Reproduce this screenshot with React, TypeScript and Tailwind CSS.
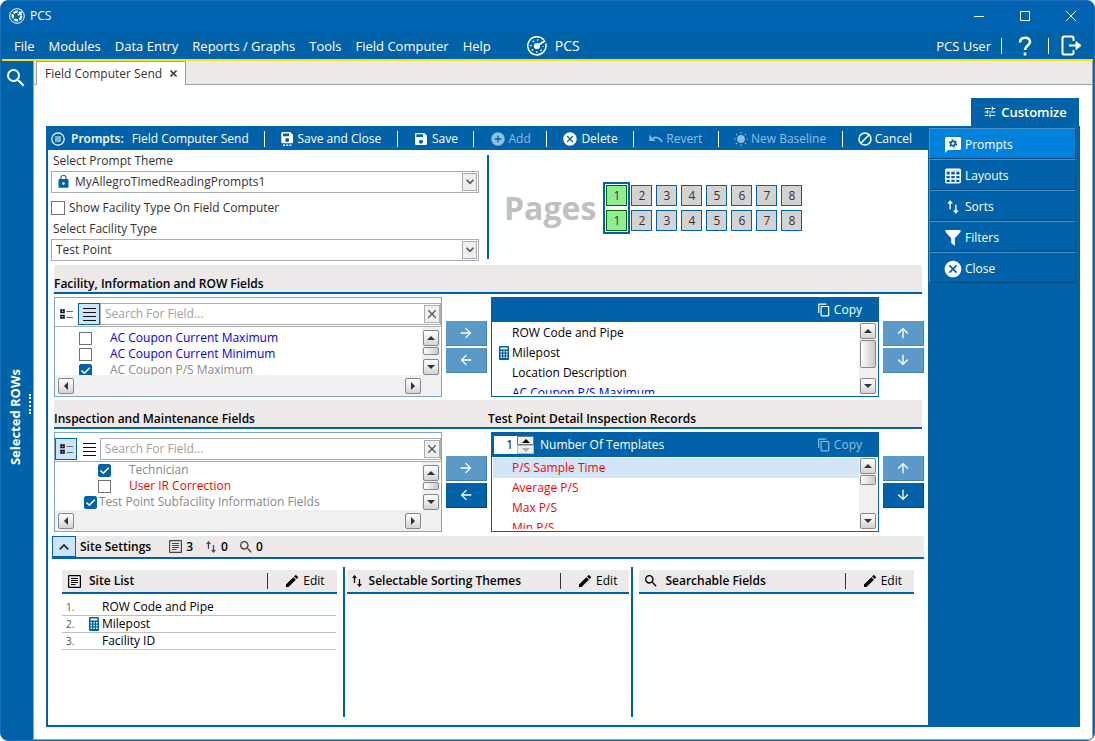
import React from "react";
import clsx from "clsx";
import {
  MdAddCircle, MdArrowBack, MdArrowDownward, MdArrowForward, MdArrowUpward, MdCancel, MdContentCopy,
  MdEdit, MdLock, MdSave, MdSearch, MdTune,
} from "react-icons/md";

type IconProps = { className?: string };

function WheelIcon({ className }: IconProps) {
  return (
    <svg viewBox="0 0 16 16" className={className} fill="none" stroke="currentColor">
      <circle cx="8" cy="8" r="7.3" strokeWidth="1" />
      <circle cx="8" cy="8" r="4.3" strokeWidth="2.2" strokeDasharray="4.2 1.2" />
      <path d="M9 7.2 13.4 3.4" strokeWidth="1.3" />
    </svg>
  )
}

function GaugeIcon({ className }: IconProps) {
  return (
    <svg viewBox="0 0 20 20" className={className} fill="none" stroke="currentColor">
      <path d="M17 4.1A9.100 9.100 0 1 0 18.700 7.500" strokeWidth="1.500" />
      <circle cx="10" cy="10" r="3.100" fill="currentColor" stroke="none" />
      <path d="M11 9.300 18.200 4.800" strokeWidth="1.700" />
      <circle cx="10" cy="10" r="6" strokeWidth="1.400" strokeDasharray="1.400 3.312" strokeDashoffset=".7" />
    </svg>
  )
}

function PromptsIcon({ className }: IconProps) {
  return (
    <svg viewBox="0 0 14 14" className={className} fill="none" stroke="currentColor" strokeWidth="1.200">
      <circle cx="7" cy="7" r="6.200" />
      <path d="M4 5h6M4 7h6M4 9h6" strokeWidth="1" />
    </svg>
  )
}

function SaveCloseIcon({ className }: IconProps) {
  return (
    <svg viewBox="0 0 14 16" className={className} fill="currentColor">
      <path fillRule="evenodd" d="M2.500 1h7.800L13 3.700V11a1.200 1.200 0 0 1-1.200 1.200H2.500A1.200 1.200 0 0 1 1.300 11V2.200A1.200 1.200 0 0 1 2.500 1ZM3 2.500v2.800h6V2.500ZM7.200 7a2 2 0 1 0 0 4 2 2 0 0 0 0-4Z" />
      <path d="M3 13.600h2V15H3zM6.200 13.600h2V15h-2zM9.400 13.600h2V15h-2z" />
    </svg>
  )
}

function RevertIcon({ className }: IconProps) {
  return (
    <svg viewBox="0 0 14 14" className={className} fill="none" stroke="currentColor" strokeWidth="1.600">
      <path d="M1.200 3.500v4.700h4.700" />
      <path d="M1.500 8C4.500 4.500 10.500 4 13 10" />
    </svg>
  )
}

function SunIcon({ className }: IconProps) {
  return (
    <svg viewBox="0 0 14 14" className={className} fill="currentColor">
      <circle cx="7" cy="7" r="3.900" />
      <path d="M6.400 0h1.200v1.600H6.400zM6.400 12.400h1.200V14H6.400zM0 6.400h1.600v1.200H0zM12.400 6.400H14v1.200h-1.600zM1.500 2.300l.8-.8 1.100 1.100-.8.8zM10.600 11.400l.8-.8 1.100 1.100-.8.8zM11.700 1.500l.8.800-1.100 1.100-.8-.8zM2.600 10.600l.8.800-1.100 1.100-.8-.8z" />
    </svg>
  )
}

function ForbidIcon({ className }: IconProps) {
  return (
    <svg viewBox="0 0 14 14" className={className} fill="none" stroke="currentColor" strokeWidth="1.500">
      <circle cx="7" cy="7" r="6" />
      <path d="M2.800 11.200 11.200 2.800" />
    </svg>
  )
}

function ChatGearIcon({ className }: IconProps) {
  return (
    <svg viewBox="0 0 16 16" className={className}>
      <path d="M1.500 0h13A1.500 1.500 0 0 1 16 1.500v10a1.500 1.500 0 0 1-1.500 1.500H3L0 16V1.500A1.500 1.500 0 0 1 1.500 0Z" fill="currentColor" />
      <circle cx="8" cy="6.500" r="2.200" fill="none" stroke="#0063a9" strokeWidth="1.700" />
      <circle cx="8" cy="6.500" r="3.500" fill="none" stroke="#0063a9" strokeWidth="1.500" strokeDasharray="1.830 1.835" />
    </svg>
  )
}

function GridIcon({ className }: IconProps) {
  return (
    <svg viewBox="0 0 16 16" className={className} fill="none" stroke="currentColor">
      <rect x=".75" y="1.250" width="14.500" height="13.500" rx="1" strokeWidth="1.500" />
      <path d="M1 3h14M1 7.200h14M1 11h14M5.500 2v12.500M10.500 2v12.500" strokeWidth="1.500" />
    </svg>
  )
}

function SortIcon({ className }: IconProps) {
  return (
    <svg viewBox="0 0 12 14" className={className} fill="none" stroke="currentColor" strokeWidth="1.200">
      <path d="M3.500 9V2M8.500 5v7" />
      <path d="M1.500 3.800h4L3.500 1.300ZM6.500 10.200h4l-2 2.500Z" fill="currentColor" strokeWidth=".5" />
    </svg>
  )
}

function FunnelIcon({ className }: IconProps) {
  return (
    <svg viewBox="0 0 16 16" className={className} fill="currentColor">
      <path d="M.5 0h15v2L9.800 8.200V16L6.200 13V8.200L.5 2Z" />
    </svg>
  )
}

function CalculatorIcon({ className }: IconProps) {
  return (
    <svg viewBox="0 0 10 14" className={className}>
      <rect width="10" height="14" rx="1" fill="#0063a9" />
      <path d="M1.500 1.500h7v2h-7zM1.500 5h1.500v1.500H1.500zM4.250 5h1.500v1.500h-1.500zM7 5h1.500v1.500H7zM1.500 7.700h1.500v1.500H1.500zM4.250 7.700h1.500v1.500h-1.500zM7 7.700h1.500v1.500H7zM1.500 10.500h1.500V12H1.500zM4.250 10.500h1.500V12h-1.500zM7 10.500h1.500V12H7z" fill="#fff" />
    </svg>
  )
}

function DocIcon({ className }: IconProps) {
  return (
    <svg viewBox="0 0 13 13" className={className} fill="none" stroke="currentColor">
      <rect x=".6" y=".6" width="11.800" height="11.800" rx=".5" strokeWidth="1.200" />
      <path d="M3 3.500h7M3 5.500h7M3 7.500h7M3 9.500h4.500" strokeWidth="1" />
    </svg>
  )
}

function LogoutIcon({ className }: IconProps) {
  return (
    <svg viewBox="0 0 21 21" className={className} fill="none" stroke="currentColor" strokeWidth="2">
      <path d="M12.500 6V3A1.500 1.500 0 0 0 11 1.500H3A1.500 1.500 0 0 0 1.500 3v15A1.500 1.500 0 0 0 3 19.500h8a1.500 1.500 0 0 0 1.500-1.500v-3" />
      <path d="M8 10.500h9" />
      <path d="M15 6.500 20 10.500 15 14.500Z" fill="currentColor" strokeWidth="1" />
    </svg>
  )
}

function TreeIcon({ className }: IconProps) {
  return (
    <svg viewBox="0 0 13 10" className={className} fill="none" stroke="#111">
      <path d="M1 1h3v2.500H1zM1 6.500h3V9H1z" strokeWidth="1.600" />
      <path d="M6.500 2.500H13M6.500 8.500H13" stroke="#666" />
    </svg>
  )
}

function LinesIcon({ className }: IconProps) {
  return (
    <svg viewBox="0 0 13 13" className={className} stroke="#111" shapeRendering="crispEdges">
      <path d="M0 .5h13M0 4.500h13M0 8.500h13M0 12.500h13" />
    </svg>
  )
}

function ArrowGlyph({ dir }: { dir: "up" | "down" | "left" | "right" }) {
  const points = { up: "4,2 8,6 0,6", down: "0,2 8,2 4,6", left: "2,4 6,0 6,8", right: "6,4 2,0 2,8" }
  return (
    <svg viewBox="0 0 8 8" className="size-2" fill="#333">
      <polygon points={points[dir]} />
    </svg>
  )
}

function ScrollButton({ dir }: { dir: "up" | "down" | "left" | "right" }) {
  return (
    <button
      type="button"
      aria-label={`Scroll ${dir}`}
      className="flex size-4 shrink-0 items-center justify-center rounded-xs border border-[#888] bg-linear-to-b from-white to-[#d4d4d4]"
    >
      <ArrowGlyph dir={dir} />
    </button>
  )
}

function VerticalScroll({ thumbClassName }: { thumbClassName: string }) {
  return (
    <div className="flex w-[18px] shrink-0 flex-col items-center justify-between bg-[#f0f0f0]">
      <ScrollButton dir="up" />
      <div className="flex-1 pt-px">
        <div className={clsx("w-4 rounded-xs border border-[#888] bg-linear-to-r from-white to-[#c8c8c8]", thumbClassName)} />
      </div>
      <ScrollButton dir="down" />
    </div>
  )
}

function CheckBox({ id, checked, className }: { id: string; checked?: boolean; className?: string }) {
  return (
    <span className={clsx("relative flex shrink-0", className ?? "size-[13px]")}>
      <input
        id={id}
        type="checkbox"
        defaultChecked={checked}
        className="peer size-full appearance-none border border-[#707070] bg-white checked:rounded-xs checked:border-[#0063a9] checked:bg-[#0063a9]"
      />
      <svg viewBox="0 0 13 13" className="pointer-events-none absolute inset-0 hidden peer-checked:block" fill="none" stroke="#fff" strokeWidth="1.500">
        <path d="M2.500 6.500 5.300 9.300 10.700 3.800" />
      </svg>
    </span>
  )
}

interface SelectFieldProps {
  id: string;
  label: string;
  value: string;
  locked?: boolean;
}

function SelectField({ id, label, value, locked }: SelectFieldProps) {
  return (
    <div>
      <label htmlFor={id} className="block h-[21px] pl-0.5 leading-[21px]">{label}</label>
      <div className="relative">
        <select
          id={id}
          className={clsx("block h-[22px] w-full appearance-none border border-[#abadb3] bg-white", locked ? "pl-[23px]" : "pl-1")}
        >
          <option>{value}</option>
        </select>
        {locked && <MdLock className="pointer-events-none absolute top-[3px] left-[5px] size-[15px] text-[#0063a9]" />}
        <span className="pointer-events-none absolute top-0.5 right-0.5 flex h-[18px] w-[15px] items-center justify-center border border-[#abadb3] bg-[#eee]">
          <svg viewBox="0 0 8 6" className="h-1.5 w-2" fill="none" stroke="#555" strokeWidth="1.600"><path d="M.6.8 4 4.400 7.400.8" /></svg>
        </span>
      </div>
    </div>
  )
}

const toolbar = [
  { label: "Save and Close", icon: SaveCloseIcon, iconClass: "h-4 w-3.5" },
  { label: "Save", icon: MdSave, iconClass: "size-4" },
  { label: "Add", icon: MdAddCircle, iconClass: "size-4", disabled: true },
  { label: "Delete", icon: MdCancel, iconClass: "size-4" },
  { label: "Revert", icon: RevertIcon, iconClass: "size-3.5", disabled: true },
  { label: "New Baseline", icon: SunIcon, iconClass: "size-3.5", disabled: true },
  { label: "Cancel", icon: ForbidIcon, iconClass: "size-3.5" },
]

function Toolbar() {
  return (
    <div className="flex h-6 items-center justify-between bg-[#0063a9] pt-0.5 pr-4 pl-[5px] text-white">
      <h1 className="flex items-center">
        <PromptsIcon className="size-3.5" />
        <span className="ml-1.5 font-semibold">Prompts:</span>
        <span className="ml-2">Field Computer Send</span>
      </h1>
      {toolbar.map(({ label, icon: Icon, iconClass, disabled }) => (
        <React.Fragment key={label}>
          <span className="h-4 w-px bg-white" />
          <button type="button" disabled={disabled} className={clsx("flex items-center gap-[3px] font-medium", disabled && "text-[#8fbfe0]")}>
            <Icon className={iconClass} />
            {label}
          </button>
        </React.Fragment>
      ))}
    </div>
  )
}

function PageColumn({ page }: { page: number }) {
  const selected = page === 1
  const cell = clsx(
    "size-[21px] border text-center leading-[19px]",
    selected ? "border-[#006400] bg-[#90ee90]" : "border-[#0063a9] bg-[#d3d3d3]"
  )
  return (
    <div className={clsx("-ml-0.5 flex flex-col gap-1 border-2 p-px", selected ? "border-[#0063a9]" : "border-transparent")}>
      <button type="button" className={cell}>{page}</button>
      <button type="button" className={cell}>{page}</button>
    </div>
  )
}

function SectionHeader({ left, right }: { left: string; right?: string }) {
  return (
    <div className="mr-0.5 flex h-[29px] items-end border-b-2 border-[#0063a9] bg-[#ece9e8] font-semibold text-black">
      <h2 className="flex-1">{left}</h2>
      {right && <h2 className="flex-1">{right}</h2>}
    </div>
  )
}

interface Field {
  label: string;
  checked?: boolean;
  color: string;
  indent: string;
  gap: string;
}

function FieldPicker({ view, fields, className }: { view: "tree" | "list"; fields: Field[]; className?: string }) {
  const toggle = "flex size-[22px] items-center justify-center border"
  const on = "border-[#0063a9] bg-[#cce4ff]"
  const id = React.useId()
  return (
    <div className="flex h-[100px] min-w-0 flex-1 flex-col border border-[#7ba7cb] pt-[5px]">
      <div className="flex h-[22px]">
        <button type="button" aria-label="Tree view" className={clsx(toggle, view === "tree" ? on : "border-transparent")}>
          <TreeIcon className="h-2.5 w-[13px]" />
        </button>
        <button type="button" aria-label="List view" className={clsx(toggle, "ml-px", view === "list" ? on : "border-transparent")}>
          <LinesIcon className="size-[13px]" />
        </button>
        <div className="flex min-w-0 flex-1 items-center border border-[#abadb3]">
          <input
            type="text"
            aria-label="Search For Field"
            placeholder="Search For Field..."
            className="min-w-0 flex-1 pl-1 outline-none placeholder:text-[#a0a0a0]"
          />
          <button type="button" aria-label="Clear" className="flex h-[18px] w-4 items-center justify-center border border-[#abadb3] bg-[#f0f0f0]">
            <svg viewBox="0 0 8 8" className="size-2" stroke="#555" strokeWidth="1.300"><path d="m0 0 8 8M8 0 0 8" /></svg>
          </button>
        </div>
      </div>
      <div className="mt-px flex h-[49px] border-t border-[#abadb3] pr-px">
        <div className={clsx("min-w-0 flex-1 overflow-hidden", className)}>
          {fields.map(({ label, checked, color, indent, gap }, i) => (
            <div key={i} className={clsx("flex h-4 items-center", indent, gap)}>
              <CheckBox id={`${id}-${i}`} checked={checked} />
              <label htmlFor={`${id}-${i}`} className={clsx("whitespace-nowrap", color)}>{label}</label>
            </div>
          ))}
        </div>
        <div className="flex bg-[#f0f0f0] pt-[3px]"><VerticalScroll thumbClassName="h-2" /></div>
      </div>
      <div className="flex flex-1 items-center justify-between bg-[#f0f0f0] pr-5 pl-[3px]">
        <ScrollButton dir="left" />
        <ScrollButton dir="right" />
      </div>
    </div>
  )
}

interface MoveButtonsProps {
  first: React.ComponentType<IconProps>;
  second: React.ComponentType<IconProps>;
  labels: [string, string];
  secondEnabled?: boolean;
}

function MoveButtons({ first: First, second: Second, labels, secondEnabled }: MoveButtonsProps) {
  const base = "flex h-[25px] items-center justify-center border-r border-b text-white"
  const dim = "border-[#4482b4] bg-[#5b9ac8]"
  return (
    <div className="flex w-[41px] shrink-0 flex-col gap-0.5 pt-6">
      <button type="button" aria-label={labels[0]} className={clsx(base, dim)}>
        <First className="size-4" />
      </button>
      <button type="button" aria-label={labels[1]} className={clsx(base, secondEnabled ? "border-[#004a80] bg-[#0063a9]" : dim)}>
        <Second className="size-4" />
      </button>
    </div>
  )
}

interface SelectedListProps {
  items: { label: string; color: string; calculated?: boolean; selected?: boolean }[];
  templates?: boolean;
  thumbClassName: string;
}

function SelectedList({ items, templates, thumbClassName }: SelectedListProps) {
  return (
    <div className="flex h-[100px] min-w-0 flex-1 flex-col border border-[#0063a9] text-black">
      <div className="flex h-6 shrink-0 items-center bg-[#0063a9] pr-4 pl-0.5 text-white">
        {templates && (
          <>
            <div className="flex h-[18px] w-10 bg-white">
              <input
                id="templates"
                type="text"
                defaultValue="1"
                className="w-[23px] pr-1 text-right text-black outline-none"
              />
              <div className="flex flex-1 flex-col">
                <button type="button" aria-label="Increase" className="flex h-[9px] items-center justify-center border border-[#777] bg-[#eee]">
                  <svg viewBox="0 0 8 4" className="h-1 w-2"><polygon points="4,0 8,4 0,4" fill="#000" /></svg>
                </button>
                <button type="button" aria-label="Decrease" className="flex h-[9px] items-center justify-center border border-[#bbb] bg-[#eee]">
                  <svg viewBox="0 0 8 4" className="h-1 w-2"><polygon points="0,0 8,0 4,4" fill="#aaa" /></svg>
                </button>
              </div>
            </div>
            <label htmlFor="templates" className="ml-1.5">Number Of Templates</label>
          </>
        )}
        <button type="button" disabled={templates} className={clsx("ml-auto flex items-center gap-[3px] font-medium", templates && "text-[#8fbfe0]")}>
          <MdContentCopy className="size-3.5" />
          Copy
        </button>
      </div>
      <div className="flex min-h-0 flex-1 pt-px pr-px pb-0.5 pl-px">
        <ul className="min-w-0 flex-1 overflow-hidden">
          {items.map(({ label, color, calculated, selected }) => (
            <li key={label} className={clsx("flex h-5 items-center pl-1.5", color, selected && "bg-[#d1e5f6]")}>
              <span className="w-[13px] shrink-0">{calculated && <CalculatorIcon className="h-3.5 w-2.5" />}</span>
              {label}
            </li>
          ))}
        </ul>
        <VerticalScroll thumbClassName={thumbClassName} />
      </div>
    </div>
  )
}

interface SiteColumnProps {
  title: string;
  icon: React.ReactNode;
  className?: string;
  children?: React.ReactNode;
}

function SiteColumn({ title, icon, className, children }: SiteColumnProps) {
  return (
    <section className={clsx("min-w-0 pt-[3px]", className ?? "flex-1")}>
      <header className="flex h-6 items-center border-b-2 border-[#0063a9] bg-[#ece9e8] pr-3 pl-1 text-black">
        {icon}
        <h3 className="ml-1.5 font-semibold">{title}</h3>
        <span className="ml-auto h-4 w-px bg-[#333]" />
        <button type="button" className="ml-4 flex items-center gap-[3px]">
          <MdEdit className="size-4" />
          Edit
        </button>
      </header>
      {children}
    </section>
  )
}

const facilityFields: Field[] = [
  { label: "AC Coupon Current Maximum", color: "text-[#0000ff]", indent: "pl-6", gap: "gap-[18px]" },
  { label: "AC Coupon Current Minimum", color: "text-[#0000ff]", indent: "pl-6", gap: "gap-[18px]" },
  { label: "AC Coupon P/S Maximum", checked: true, color: "text-[#888]", indent: "pl-6", gap: "gap-[18px]" },
]

const inspectionFields: Field[] = [
  { label: "Technician", checked: true, color: "text-[#888]", indent: "pl-[43px]", gap: "gap-[18px]" },
  { label: "User IR Correction", color: "text-[#ff0000]", indent: "pl-[43px]", gap: "gap-[18px]" },
  { label: "Test Point Subfacility Information Fields", checked: true, color: "text-[#888]", indent: "pl-[29px]", gap: "gap-0.5" },
]

const siteList = [
  { label: "ROW Code and Pipe" },
  { label: "Milepost", calculated: true },
  { label: "Facility ID" },
]

const sideMenu = [
  { label: "Prompts", icon: ChatGearIcon, active: true },
  { label: "Layouts", icon: GridIcon },
  { label: "Sorts", icon: SortIcon },
  { label: "Filters", icon: FunnelIcon },
  { label: "Close", icon: MdCancel },
]

const menus = ["File", "Modules", "Data Entry", "Reports / Graphs", "Tools", "Field Computer", "Help"]

function TitleBar() {
  return (
    <header className="text-white">
      <div className="flex h-[30px] items-center bg-[#0063b1] pl-2">
        <WheelIcon className="size-4" />
        <span className="ml-[5px]">PCS</span>
        <div className="ml-auto flex">
          <button type="button" aria-label="Minimize" className="flex w-[46px] justify-center">
            <svg viewBox="0 0 10 10" className="size-2.5" stroke="currentColor"><path d="M0 5.500h10" /></svg>
          </button>
          <button type="button" aria-label="Maximize" className="flex w-[46px] justify-center">
            <svg viewBox="0 0 10 10" className="size-2.5" fill="none" stroke="currentColor"><path d="M.5.5h9v9h-9z" /></svg>
          </button>
          <button type="button" aria-label="Close window" className="flex w-[46px] justify-center">
            <svg viewBox="0 0 10 10" className="size-2.5" stroke="currentColor"><path d="m0 0 10 10M10 0 0 10" /></svg>
          </button>
        </div>
      </div>
      <div className="mx-px flex h-[30px] items-center border-b-2 border-[#ffe014] bg-[#0063a9] pt-px pr-[11px] pl-3 text-[13px]">
        <nav className="flex gap-3.5">
          {menus.map(menu => <button key={menu} type="button">{menu}</button>)}
        </nav>
        <GaugeIcon className="ml-9 size-5" />
        <span className="ml-2 text-sm">PCS</span>
        <span className="ml-auto">PCS User</span>
        <span className="ml-2.5 h-4 w-px bg-white" />
        <button type="button" aria-label="Help" className="ml-4 flex">
          <svg viewBox="0 0 14 20" className="h-5 w-3.5" fill="none" stroke="currentColor" strokeWidth="2.600">
            <path d="M2 6.500C2 3 4 1.700 7 1.700s5 1.500 5 4.300c0 3.500-5 3.500-5 8" />
            <path d="M7 16.500v3" />
          </svg>
        </button>
        <span className="ml-4 h-4 w-px bg-white" />
        <button type="button" aria-label="Log out" className="ml-3"><LogoutIcon className="size-[21px]" /></button>
      </div>
    </header>
  )
}

export default function App() {
  return (
    <div className="flex min-h-screen flex-col overflow-hidden rounded-lg border border-[#1a6fb8] bg-[#0063a9] font-['Open_Sans','Noto_Sans',sans-serif] text-xs leading-4 text-[#333]">
      <TitleBar />
      <div className="flex flex-1">
        <aside className="flex w-8 shrink-0 flex-col text-white">
          <button type="button" aria-label="Search" className="flex h-[34px] items-center justify-center pr-0.5">
            <MdSearch className="size-6" />
          </button>
          <div className="flex flex-1 items-center justify-end gap-1.5 pr-0.5">
            <span className="rotate-180 text-[13px] leading-4 font-bold [writing-mode:vertical-rl]">Selected ROWs</span>
            <span className="mb-7 h-5 border-l-2 border-dotted border-white" />
          </div>
        </aside>

        <div className="mr-px flex min-w-0 flex-1 flex-col border-r border-b border-l border-[#a0a0a0] bg-white">
          <div className="flex h-6 border-b border-[#a0a0a0] bg-[#ece9e8] pl-0.5">
            <div className="flex h-6 items-center gap-2 border border-b-0 border-[#a0a0a0] bg-white px-2">
              Field Computer Send
              <button type="button" aria-label="Close tab">
                <svg viewBox="0 0 7 7" className="size-[7px]" stroke="#444" strokeWidth="1.600"><path d="m.5.5 6 6M6.500.5l-6 6" /></svg>
              </button>
            </div>
          </div>

          <div className="flex flex-1 flex-col px-3 pt-[13px] pb-3">
            <button type="button" className="mr-px flex h-7 w-[108px] items-center justify-center gap-1 self-end bg-[#0063a9] text-[13px] font-semibold text-white">
              <MdTune className="size-3.5" />
              Customize
            </button>

            <div className="flex flex-1 bg-[#0063a9]">
              <main className="flex min-w-0 flex-1 flex-col">
                <Toolbar />
                <div className="mb-0.5 ml-0.5 flex flex-1 flex-col bg-white">
                  <div className="flex h-[115px]">
                    <div className="ml-[3px] flex w-[428px] flex-col">
                      <SelectField id="theme" label="Select Prompt Theme" value="MyAllegroTimedReadingPrompts1" locked />
                      <div className="flex h-[25px] items-center gap-1 pt-1">
                        <CheckBox id="show-type" className="size-3.5" />
                        <label htmlFor="show-type">Show Facility Type On Field Computer</label>
                      </div>
                      <SelectField id="type" label="Select Facility Type" value="Test Point" />
                    </div>
                    <div className="mt-[5px] mb-1.5 ml-2 w-0.5 bg-[#0063a9]" />
                    <div className="ml-[15px] flex items-center gap-[9px]">
                      <span className="text-[32px] font-bold text-[#c0c0c0]">Pages</span>
                      <div className="flex">
                        {Array.from({ length: 8 }).map((_, index) => <PageColumn key={index} page={index + 1} />)}
                      </div>
                    </div>
                  </div>

                  <div className="flex flex-col gap-[3px] pr-1 pl-1.5">
                    <SectionHeader left="Facility, Information and ROW Fields" />
                    <div className="flex gap-1">
                      <FieldPicker view="list" fields={facilityFields} className="pt-[3px]" />
                      <MoveButtons first={MdArrowForward} second={MdArrowBack} labels={["Add field", "Remove field"]} />
                      <SelectedList
                        thumbClassName="h-7"
                        items={[
                          { label: "ROW Code and Pipe", color: "text-black" },
                          { label: "Milepost", color: "text-black", calculated: true },
                          { label: "Location Description", color: "text-black" },
                          { label: "AC Coupon P/S Maximum", color: "text-[#0000ff]" },
                        ]}
                      />
                      <MoveButtons first={MdArrowUpward} second={MdArrowDownward} labels={["Move up", "Move down"]} />
                    </div>
                    <SectionHeader left="Inspection and Maintenance Fields" right="Test Point Detail Inspection Records" />
                    <div className="flex gap-1">
                      <FieldPicker view="tree" fields={inspectionFields} />
                      <MoveButtons first={MdArrowForward} second={MdArrowBack} labels={["Add field", "Remove field"]} secondEnabled />
                      <SelectedList
                        templates
                        thumbClassName="h-2.5"
                        items={[
                          { label: "P/S Sample Time", color: "text-[#ff0000]", selected: true },
                          { label: "Average P/S", color: "text-[#ff0000]" },
                          { label: "Max P/S", color: "text-[#ff0000]" },
                          { label: "Min P/S", color: "text-[#ff0000]" },
                        ]}
                      />
                      <MoveButtons first={MdArrowUpward} second={MdArrowDownward} labels={["Move up", "Move down"]} secondEnabled />
                    </div>
                  </div>

                  <div className="mx-1 mt-1 flex h-[23px] items-center border-b-2 border-[#0063a9] bg-[#ece9e8] font-semibold text-black">
                    <button type="button" aria-label="Collapse" className="flex h-full w-6 items-center justify-center border border-[#0063a9] bg-[#cce4ff]">
                      <svg viewBox="0 0 10 6" className="h-1.5 w-2.5" fill="none" stroke="#333" strokeWidth="1.800"><path d="M.7 5.300 5 1 9.300 5.300" /></svg>
                    </button>
                    <h2 className="ml-1">Site Settings</h2>
                    <span className="ml-[18px] flex items-center gap-1"><DocIcon className="size-[13px] text-[#444]" />3</span>
                    <span className="ml-3 flex items-center gap-1"><SortIcon className="h-3.5 w-3 text-[#444]" />0</span>
                    <span className="ml-2.5 flex items-center gap-0.5"><MdSearch className="size-4 text-[#444]" />0</span>
                  </div>

                  <div className="mx-3.5 my-2 flex flex-1">
                    <SiteColumn title="Site List" icon={<DocIcon className="mx-0.5 size-[13px]" />}>
                      <ol className="mt-[5px] mr-px text-black">
                        {siteList.map(({ label, calculated }, index) => (
                          <li key={label} className="flex h-[17px] items-center border-b border-[#c0c0c0] pl-1">
                            <span className="w-[23px] text-[10px] text-[#555]">{index + 1}.</span>
                            <span className="w-[13px]">{calculated && <CalculatorIcon className="h-3.5 w-2.5" />}</span>
                            {label}
                          </li>
                        ))}
                      </ol>
                    </SiteColumn>
                    <span className="mr-0.5 ml-1.5 w-0.5 bg-[#0063a9]" />
                    <SiteColumn
                      title="Selectable Sorting Themes"
                      icon={<SortIcon className="h-3.5 w-3" />}
                      className="flex-[1.03_1_0%]"
                    />
                    <span className="mr-1.5 ml-0.5 w-0.5 bg-[#0063a9]" />
                    <SiteColumn title="Searchable Fields" icon={<MdSearch className="size-4" />} />
                  </div>
                </div>
              </main>

              <nav className="w-[152px] shrink-0 pt-0.5 pr-1 pl-px">
                {sideMenu.map(({ label, icon: Icon, active }) => (
                  <button
                    key={label}
                    type="button"
                    className={clsx(
                      "flex h-[31px] w-full items-center gap-1 border border-t-[#4a91c8] border-r-[#004a80] border-b-[#004a80] border-l-[#4a91c8] pt-0.5 pl-3.5 font-medium text-white",
                      active && "bg-[#0082dc]"
                    )}
                  >
                    <span className="flex w-[17px] justify-center">
                      <Icon className={Icon === MdCancel ? "size-5 shrink-0" : "size-4"} />
                    </span>
                    {label}
                  </button>
                ))}
              </nav>
            </div>
          </div>
        </div>
      </div>
    </div>
  )
}
